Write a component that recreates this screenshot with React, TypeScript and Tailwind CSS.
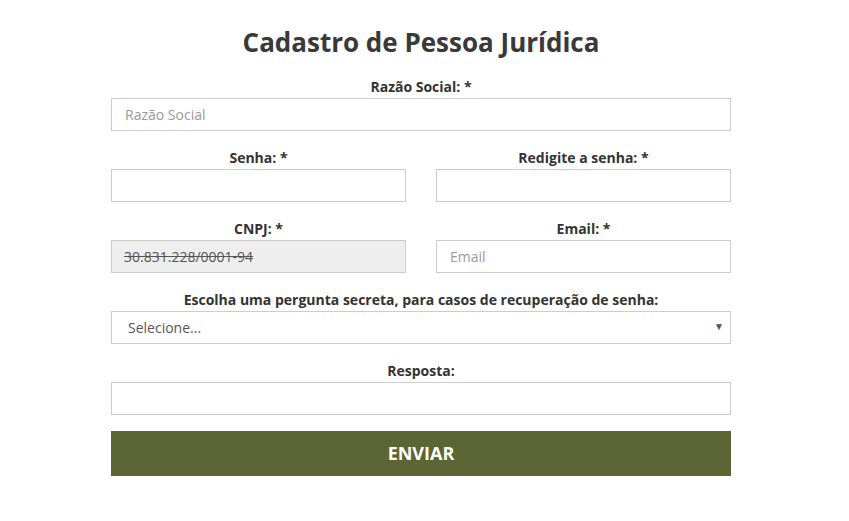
export default function App() {
    const label = 'block text-center text-[14px] font-bold leading-5 text-[#333] mb-[1px]';
    const input =
        'block w-full h-[33px] border border-[#ccc] bg-white px-[13px] text-[14px] text-[#555] placeholder:text-[#999] outline-none';

    return (
        <div className="min-h-screen bg-white font-['Open_Sans',sans-serif]">
            <form className="ml-[111px] w-[620px] pt-[25px]">
                <h1 className="text-center text-[26px] font-bold leading-[34px] text-[#393939] font-['Open_Sans',sans-serif] mb-[18px]">
                    Cadastro de Pessoa Jurídica
                </h1>

                <div>
                    <label className={label}>Razão Social: *</label>
                    <input className={input} placeholder="Razão Social" />
                </div>

                <div className="mt-[17px] grid grid-cols-2 gap-[30px]">
                    <div>
                        <label className={label}>Senha: *</label>
                        <input type="password" className={input} />
                    </div>
                    <div>
                        <label className={label}>Redigite a senha: *</label>
                        <input type="password" className={input} />
                    </div>
                </div>

                <div className="mt-[17px] grid grid-cols-2 gap-[30px]">
                    <div>
                        <label className={label}>CNPJ: *</label>
                        <div className="flex h-[33px] items-center border border-[#ccc] bg-[#eee] px-[12px] text-[14px] text-[#555] line-through decoration-[#555]">
                            30.831.228/0001-94
                        </div>
                    </div>
                    <div>
                        <label className={label}>Email: *</label>
                        <input className={input} placeholder="Email" />
                    </div>
                </div>

                <div className="mt-[17px]">
                    <label className={label}>Escolha uma pergunta secreta, para casos de recuperação de senha:</label>
                    <div className="relative">
                        <select className="block h-[33px] w-full appearance-none border border-[#ccc] bg-white pl-[16px] text-[14px] text-[#555] outline-none">
                            <option>Selecione...</option>
                        </select>
                        <span className="pointer-events-none absolute right-[7px] top-[8px] text-[10px] text-[#555]">▼</span>
                    </div>
                </div>

                <div className="mt-[17px]">
                    <label className={label}>Resposta:</label>
                    <input className={input} />
                </div>

                <button
                    type="button"
                    className="mt-4 block h-[45px] w-full bg-[#5c6534] text-[18px] font-bold text-white"
                >
                    ENVIAR
                </button>
            </form>
        </div>
    );
}
